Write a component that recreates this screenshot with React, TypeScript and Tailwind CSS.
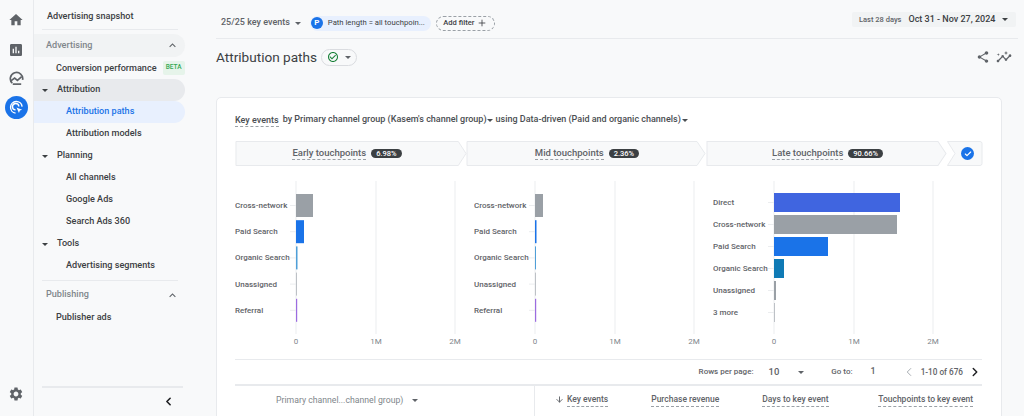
import React from 'react';
import { ChevronLeft, ChevronRight, Plus, ArrowDown, Check } from 'lucide-react';
import { MdHome, MdAssessment, MdSettings, MdShare, MdInsights, MdExpandLess, MdCheckCircleOutline } from 'react-icons/md';

const Caret = ({ className = '' }: { className?: string }) => (
  <svg viewBox="0 0 8 4" className={`w-[6px] h-[3px] shrink-0 ${className}`} fill="currentColor">
    <path d="M0 0h8L4 4z" />
  </svg>
);

type Bar = { label: string; w: number; color: string };

const chart1: Bar[] = [
  { label: 'Cross-network', w: 17, color: '#9aa0a6' },
  { label: 'Paid Search', w: 8, color: '#1a73e8' },
  { label: 'Organic Search', w: 1.5, color: '#4f9fd8' },
  { label: 'Unassigned', w: 1, color: '#bdc1c6' },
  { label: 'Referral', w: 1.2, color: '#9c6ce0' },
];
const chart2: Bar[] = [
  { label: 'Cross-network', w: 8, color: '#9aa0a6' },
  { label: 'Paid Search', w: 1.5, color: '#1a73e8' },
  { label: 'Organic Search', w: 1, color: '#4f9fd8' },
  { label: 'Unassigned', w: 1, color: '#bdc1c6' },
  { label: 'Referral', w: 1.2, color: '#9c6ce0' },
];
const chart3: Bar[] = [
  { label: 'Direct', w: 126, color: '#4065e0' },
  { label: 'Cross-network', w: 123, color: '#9aa0a6' },
  { label: 'Paid Search', w: 54, color: '#1a73e8' },
  { label: 'Organic Search', w: 10, color: '#0f7ab5' },
  { label: 'Unassigned', w: 2, color: '#9aa0a6' },
  { label: '3 more', w: 1, color: '#bdc1c6' },
];

const Chart = ({ bars }: { bars: Bar[] }) => {
  const six = bars.length === 6;
  const step = six ? 22 : 26.2;
  const h = six ? 19 : 23;
  const top = six ? 12 : 13;
  return (
    <svg width="239" height="170" className="block shrink-0">
      {[61, 141, 220].map((x) => (
        <line key={x} x1={x} x2={x} y1="0" y2="153" stroke="#ebedef" strokeWidth="1" />
      ))}
      {bars.map((b, i) => {
        const y = top + i * step;
        return (
          <g key={b.label}>
            <line x1="55" x2="61" y1={y + h / 2} y2={y + h / 2} stroke="#ebedef" />
            <text x="0" y={y + h / 2 + 2.5} fontSize="8" fontWeight="500" fill="#5f6368" fontFamily="Roboto, sans-serif">
              {b.label}
            </text>
            <rect x="61" y={y} width={b.w} height={h} fill={b.color} />
          </g>
        );
      })}
      {[[61, '0'], [141, '1M'], [220, '2M']].map(([x, t]) => (
        <text key={t} x={x} y="163" textAnchor="middle" fontSize="8" fill="#80868b" fontFamily="Roboto, sans-serif">
          {t}
        </text>
      ))}
    </svg>
  );
};

const Segment = ({ title, pct, width }: { title: string; pct: string; width: string }) => (
  <div className={`relative h-[25px] flex items-center justify-center ${width}`}>
    <svg viewBox="0 0 240 25" preserveAspectRatio="none" className="absolute inset-0 w-full h-full">
      <path d="M1 .5H231L239 12.5 231 24.5H1z" fill="#f8f9fa" stroke="#e8eaed" />
    </svg>
    <span className="relative text-[9.5px] font-medium text-[#5f6368] border-b border-dashed border-[#9aa0a6] leading-[12px]">{title}</span>
    <span className="relative ml-[5px] px-[5px] h-[9px] rounded-full bg-[#3c4043] text-white text-[7.5px] leading-[9px] font-medium">{pct}</span>
  </div>
);

const SideRow = ({ label, indent, active, tone, caret }: { label: string; indent: string; active?: boolean; tone?: string; caret?: boolean }) => (
  <div className={`h-[22px] w-[151px] shrink-0 flex items-center rounded-r-full ${indent} ${active ? 'bg-[#e8f0fe] text-[#1a73e8]' : 'text-[#3c4043]'} ${tone ?? ''}`}>
    {caret && <Caret className="mr-[9px] ml-[8px] text-[#3c4043]" />}
    <span className="text-[9.1px] font-medium whitespace-nowrap">{label}</span>
  </div>
);

export default function App() {
  return (
    <div className="w-[1024px] h-[416px] overflow-hidden flex bg-[#f8f9fa] font-['Roboto',sans-serif] text-[#3c4043]">
      {/* icon rail */}
      <div className="w-[34px] h-full shrink-0 border-r border-[#e8eaed] flex flex-col items-center pt-[12px] pr-[1px] text-[#5f6368]">
        <MdHome size={16} className="mb-[14px]" />
        <MdAssessment size={16} className="mb-[13px]" />
        <svg viewBox="0 0 16 16" className="w-[15px] h-[15px] mb-[10px]" fill="none" stroke="#5f6368" strokeWidth="1.8">
          <path d="M3.5 13A6.6 6.6 0 1 1 14.5 9.5" />
          <path d="M2 10.5l4-3 3 2.500 4.500-4" />
          <path d="M4 14h9" />
        </svg>
        <div className="w-[23px] h-[23px] rounded-full bg-[#1a73e8] flex items-center justify-center">
          <svg viewBox="0 0 16 16" className="w-[15px] h-[15px]" fill="none" stroke="#fff" strokeWidth="1.500">
            <path d="M7 14A6.200 6.200 0 1 1 14 7" />
            <path d="M7 10.500A3.400 3.400 0 1 1 10.500 7" />
            <path d="M8 8l6 2.300-2.400 1 -1 2.500z" fill="#fff" stroke="none" />
          </svg>
        </div>
        <MdSettings size={16} className="mt-auto mb-[14px]" />
      </div>

      {/* side nav */}
      <div className="w-[182px] h-full shrink-0 flex flex-col">
        <div className="h-[30px] shrink-0 mx-[8px] pt-[10px] pl-[5px] border-b border-[#e8eaed] w-[136px]">
          <span className="block text-[9.1px] leading-[12px] font-medium text-[#3c4043] whitespace-nowrap">Advertising snapshot</span>
        </div>
        <div className="mt-[4px] h-[23px] shrink-0 w-[151px] rounded-r-full bg-[#f1f3f4] flex items-center justify-between pl-[12px] pr-[6px]">
          <span className="text-[9.1px] font-medium text-[#80868b]">Advertising</span>
          <MdExpandLess size={13} className="text-[#5f6368]" />
        </div>
        <div className="h-[22px] shrink-0 w-[151px] flex items-center pl-[22px] pt-[2px]">
          <span className="text-[9.1px] font-medium whitespace-nowrap">Conversion performance</span>
          <span className="ml-[6px] -mt-[2px] h-[14px] w-[22px] flex items-center justify-center rounded-[2px] bg-[#e6f4ea] text-[#34a853] text-[6.500px] font-medium">BETA</span>
        </div>
        <SideRow label="Attribution" indent="" caret tone="bg-[#e8eaed]" />
        <SideRow label="Attribution paths" indent="pl-[32px]" active />
        <SideRow label="Attribution models" indent="pl-[32px]" />
        <SideRow label="Planning" indent="" caret />
        <SideRow label="All channels" indent="pl-[32px]" />
        <SideRow label="Google Ads" indent="pl-[32px]" />
        <SideRow label="Search Ads 360" indent="pl-[32px]" />
        <SideRow label="Tools" indent="" caret />
        <SideRow label="Advertising segments" indent="pl-[32px]" />
        <div className="mt-[3px] ml-[8px] w-[136px] border-t border-[#e8eaed]" />
        <div className="mt-[3px] h-[22px] shrink-0 w-[151px] flex items-center justify-between pl-[12px] pr-[6px]">
          <span className="text-[9.1px] font-medium text-[#80868b]">Publishing</span>
          <MdExpandLess size={13} className="text-[#5f6368]" />
        </div>
        <div className="mt-[1px]">
          <SideRow label="Publisher ads" indent="pl-[22px]" />
        </div>
        <div className="mt-[57px] ml-[8px] w-[141px] border-t-2 border-[#e8eaed]" />
        <div className="flex pl-[128px] pt-[7px]">
          <ChevronLeft size={13} strokeWidth={3} className="text-[#202124]" />
        </div>
      </div>

      {/* main */}
      <div className="flex-1 min-w-0 flex flex-col">
        <div className="h-[39px] shrink-0 w-[802px] border-b border-[#e8eaed] flex items-center">
          <div className="flex items-center pl-[5px] pt-[8px] text-[9px] font-medium text-[#5f6368]">
            <span>25/25 key events</span>
            <Caret className="ml-[5px]" />
          </div>
          <div className="ml-[9px] mt-[8px] h-[15px] w-[121px] rounded-full bg-[#e8f0fe] flex items-center">
            <span className="w-[12px] h-[12px] ml-[1px] rounded-full bg-[#1a73e8] text-white text-[8px] font-bold flex items-center justify-center">P</span>
            <span className="ml-[5px] text-[7.7px] text-[#3c4043] whitespace-nowrap">Path length = all touchpoin...</span>
          </div>
          <div className="ml-[5px] mt-[8px] h-[15px] w-[59px] rounded-full border border-dashed border-[#9aa0a6] flex items-center justify-center text-[7.6px] font-medium">
            <span>Add filter</span>
            <Plus size={10} strokeWidth={2} className="ml-[3px]" />
          </div>
          <div className="ml-auto mr-[2px] mt-[1px] h-[15px] w-[164px] rounded-[2px] bg-[#f1f3f4] flex items-center pl-[7px] pr-[8px]">
            <span className="text-[7.500px] font-medium text-[#5f6368] whitespace-nowrap">Last 28 days</span>
            <span className="ml-[7px] text-[9px] font-medium text-[#3c4043] whitespace-nowrap">Oct 31 - Nov 27, 2024</span>
            <Caret className="ml-auto" />
          </div>
        </div>

        <div className="h-[38px] shrink-0 w-[802px] flex items-center pb-[2px]">
          <h1 className="text-[13.6px] leading-[20px] font-normal text-[#3c4043] whitespace-nowrap">Attribution paths</h1>
          <div className="ml-[4px] h-[17px] w-[36px] rounded-full border border-[#dadce0] flex items-center justify-center gap-[6px]">
            <MdCheckCircleOutline size={12} className="text-[#188038]" />
            <Caret className="text-[#5f6368]" />
          </div>
          <div className="ml-auto mr-[6px] flex items-center gap-[6px] text-[#5f6368]">
            <MdShare size={14} />
            <MdInsights size={16} />
          </div>
        </div>

        <div className="mt-[20px] w-[786px] h-[340px] shrink-0 bg-white border border-[#e8eaed] rounded-t-[5px] pt-[15px]">
          <div className="pl-[18px] h-[14px] flex items-center text-[9px] font-medium text-[#4a4e52] whitespace-nowrap">
            <span className="border-b border-dashed border-[#9aa0a6] leading-[12px]">Key events</span>
            <span className="ml-[4px]">by Primary channel group (Kasem's channel group)</span>
            <Caret />
            <span className="ml-[3px]">using Data-driven (Paid and organic channels)</span>
            <Caret className="ml-[1px]" />
          </div>

          <div className="mt-[14px] ml-[18px] flex items-center">
            <Segment title="Early touchpoints" pct="6.98%" width="w-[232px] pr-[8px]" />
            <Segment title="Mid touchpoints" pct="2.36%" width="w-[240px] -ml-[1px] pl-[2px]" />
            <Segment title="Late touchpoints" pct="90.66%" width="w-[241px] pl-[2px]" />
            <div className="relative h-[25px] w-[36px] flex items-center justify-center">
              <svg viewBox="0 0 36 25" className="absolute inset-0 w-full h-full">
                <path d="M.5 .5H33a2 2 0 0 1 2 2V22.500a2 2 0 0 1-2 2H.5L8 12.500z" fill="#f8f9fa" stroke="#e8eaed" />
              </svg>
              <span className="relative ml-[5px] w-[13px] h-[13px] rounded-full bg-[#1a73e8] flex items-center justify-center">
                <Check size={8} strokeWidth={3.500} className="text-white" />
              </span>
            </div>
          </div>

          <div className="mt-[15px] ml-[18px] flex">
            <Chart bars={chart1} />
            <Chart bars={chart2} />
            <Chart bars={chart3} />
          </div>

          <div className="mx-[18px] mt-[8px] w-[747px] border-t border-[#e8eaed] h-[25px] flex items-center justify-end text-[#5f6368]">
            <span className="text-[8px] font-medium">Rows per page:</span>
            <span className="ml-[15px] text-[9.500px] font-medium">10</span>
            <Caret className="ml-[19px]" />
            <span className="ml-[27px] text-[8px] font-medium">Go to:</span>
            <span className="ml-[18px] text-[9px] font-medium">1</span>
            <ChevronLeft size={14} strokeWidth={1.500} className="ml-[26px] text-[#9aa0a6]" />
            <span className="ml-[5px] text-[8.200px] font-medium">1-10 of 676</span>
            <ChevronRight size={14} strokeWidth={2.500} className="ml-[5px] text-[#202124]" />
          </div>

          <div className="mx-[18px] w-[747px] border-t-2 border-[#e8eaed] h-[32px] flex text-[8.500px] font-medium text-[#5f6368]">
            <div className="w-[300px] border-r border-[#e8eaed] pl-[41px] pt-[8px] flex items-start">
              <span className="font-normal text-[8.700px] text-[#80868b]">Primary channel...channel group)</span>
              <Caret className="ml-[9px] mt-[5px]" />
            </div>
            <div className="flex-1 flex items-start pt-[7px] pl-[20px] pr-[9px] whitespace-nowrap">
              <ArrowDown size={9} strokeWidth={2.500} className="mt-[2px] mr-[3px]" />
              <span className="border-b border-dashed border-[#9aa0a6]">Key events</span>
              <span className="ml-[43px] border-b border-dashed border-[#9aa0a6]">Purchase revenue</span>
              <span className="ml-[43px] border-b border-dashed border-[#9aa0a6]">Days to key event</span>
              <span className="ml-auto border-b border-dashed border-[#9aa0a6]">Touchpoints to key event</span>
            </div>
          </div>
        </div>
      </div>
    </div>
  );
}
